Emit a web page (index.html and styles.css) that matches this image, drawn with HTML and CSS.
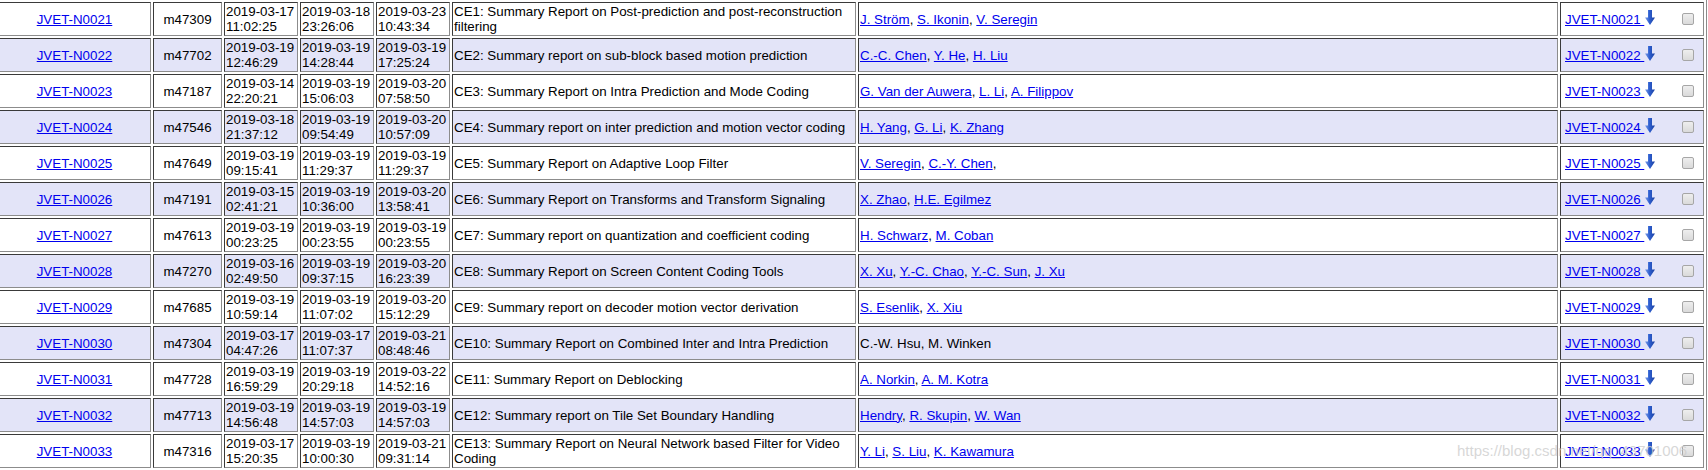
FILE: index.html
```html
<!DOCTYPE html>
<html>
<head>
<meta charset="utf-8">
<link rel="stylesheet" href="styles.css">
</head>
<body>
<table class="docs">
<tbody>
<tr class="r-odd"><td class="c-num"><a href="#">JVET-N0021</a></td><td class="c-m">m47309</td><td class="c-date">2019-03-17 11:02:25</td><td class="c-date">2019-03-18 23:26:06</td><td class="c-date">2019-03-23 10:43:34</td><td class="c-title">CE1: Summary Report on Post-prediction and post-reconstruction filtering</td><td class="c-auth"><a href="#">J. Ström</a>, <a href="#">S. Ikonin</a>, <a href="#">V. Seregin</a></td><td class="c-dl"><a href="#">JVET-N0021 </a><svg class="arrow" viewBox="0 0 10 15"><use href="#dl"/></svg><input type="checkbox" class="sel"></td></tr>
<tr class="r-even"><td class="c-num"><a href="#">JVET-N0022</a></td><td class="c-m">m47702</td><td class="c-date">2019-03-19 12:46:29</td><td class="c-date">2019-03-19 14:28:44</td><td class="c-date">2019-03-19 17:25:24</td><td class="c-title">CE2: Summary report on sub-block based motion prediction</td><td class="c-auth"><a href="#">C.-C. Chen</a>, <a href="#">Y. He</a>, <a href="#">H. Liu</a></td><td class="c-dl"><a href="#">JVET-N0022 </a><svg class="arrow" viewBox="0 0 10 15"><use href="#dl"/></svg><input type="checkbox" class="sel"></td></tr>
<tr class="r-odd"><td class="c-num"><a href="#">JVET-N0023</a></td><td class="c-m">m47187</td><td class="c-date">2019-03-14 22:20:21</td><td class="c-date">2019-03-19 15:06:03</td><td class="c-date">2019-03-20 07:58:50</td><td class="c-title">CE3: Summary Report on Intra Prediction and Mode Coding</td><td class="c-auth"><a href="#">G. Van der Auwera</a>, <a href="#">L. Li</a>, <a href="#">A. Filippov</a></td><td class="c-dl"><a href="#">JVET-N0023 </a><svg class="arrow" viewBox="0 0 10 15"><use href="#dl"/></svg><input type="checkbox" class="sel"></td></tr>
<tr class="r-even"><td class="c-num"><a href="#">JVET-N0024</a></td><td class="c-m">m47546</td><td class="c-date">2019-03-18 21:37:12</td><td class="c-date">2019-03-19 09:54:49</td><td class="c-date">2019-03-20 10:57:09</td><td class="c-title">CE4: Summary report on inter prediction and motion vector coding</td><td class="c-auth"><a href="#">H. Yang</a>, <a href="#">G. Li</a>, <a href="#">K. Zhang</a></td><td class="c-dl"><a href="#">JVET-N0024 </a><svg class="arrow" viewBox="0 0 10 15"><use href="#dl"/></svg><input type="checkbox" class="sel"></td></tr>
<tr class="r-odd"><td class="c-num"><a href="#">JVET-N0025</a></td><td class="c-m">m47649</td><td class="c-date">2019-03-19 09:15:41</td><td class="c-date">2019-03-19 11:29:37</td><td class="c-date">2019-03-19 11:29:37</td><td class="c-title">CE5: Summary Report on Adaptive Loop Filter</td><td class="c-auth"><a href="#">V. Seregin</a>, <a href="#">C.-Y. Chen</a>, </td><td class="c-dl"><a href="#">JVET-N0025 </a><svg class="arrow" viewBox="0 0 10 15"><use href="#dl"/></svg><input type="checkbox" class="sel"></td></tr>
<tr class="r-even"><td class="c-num"><a href="#">JVET-N0026</a></td><td class="c-m">m47191</td><td class="c-date">2019-03-15 02:41:21</td><td class="c-date">2019-03-19 10:36:00</td><td class="c-date">2019-03-20 13:58:41</td><td class="c-title">CE6: Summary Report on Transforms and Transform Signaling</td><td class="c-auth"><a href="#">X. Zhao</a>, <a href="#">H.E. Egilmez</a></td><td class="c-dl"><a href="#">JVET-N0026 </a><svg class="arrow" viewBox="0 0 10 15"><use href="#dl"/></svg><input type="checkbox" class="sel"></td></tr>
<tr class="r-odd"><td class="c-num"><a href="#">JVET-N0027</a></td><td class="c-m">m47613</td><td class="c-date">2019-03-19 00:23:25</td><td class="c-date">2019-03-19 00:23:55</td><td class="c-date">2019-03-19 00:23:55</td><td class="c-title">CE7: Summary report on quantization and coefficient coding</td><td class="c-auth"><a href="#">H. Schwarz</a>, <a href="#">M. Coban</a></td><td class="c-dl"><a href="#">JVET-N0027 </a><svg class="arrow" viewBox="0 0 10 15"><use href="#dl"/></svg><input type="checkbox" class="sel"></td></tr>
<tr class="r-even"><td class="c-num"><a href="#">JVET-N0028</a></td><td class="c-m">m47270</td><td class="c-date">2019-03-16 02:49:50</td><td class="c-date">2019-03-19 09:37:15</td><td class="c-date">2019-03-20 16:23:39</td><td class="c-title">CE8: Summary Report on Screen Content Coding Tools</td><td class="c-auth"><a href="#">X. Xu</a>, <a href="#">Y.-C. Chao</a>, <a href="#">Y.-C. Sun</a>, <a href="#">J. Xu</a></td><td class="c-dl"><a href="#">JVET-N0028 </a><svg class="arrow" viewBox="0 0 10 15"><use href="#dl"/></svg><input type="checkbox" class="sel"></td></tr>
<tr class="r-odd"><td class="c-num"><a href="#">JVET-N0029</a></td><td class="c-m">m47685</td><td class="c-date">2019-03-19 10:59:14</td><td class="c-date">2019-03-19 11:07:02</td><td class="c-date">2019-03-20 15:12:29</td><td class="c-title">CE9: Summary report on decoder motion vector derivation</td><td class="c-auth"><a href="#">S. Esenlik</a>, <a href="#">X. Xiu</a></td><td class="c-dl"><a href="#">JVET-N0029 </a><svg class="arrow" viewBox="0 0 10 15"><use href="#dl"/></svg><input type="checkbox" class="sel"></td></tr>
<tr class="r-even"><td class="c-num"><a href="#">JVET-N0030</a></td><td class="c-m">m47304</td><td class="c-date">2019-03-17 04:47:26</td><td class="c-date">2019-03-17 11:07:37</td><td class="c-date">2019-03-21 08:48:46</td><td class="c-title">CE10: Summary Report on Combined Inter and Intra Prediction</td><td class="c-auth">C.-W. Hsu, M. Winken</td><td class="c-dl"><a href="#">JVET-N0030 </a><svg class="arrow" viewBox="0 0 10 15"><use href="#dl"/></svg><input type="checkbox" class="sel"></td></tr>
<tr class="r-odd"><td class="c-num"><a href="#">JVET-N0031</a></td><td class="c-m">m47728</td><td class="c-date">2019-03-19 16:59:29</td><td class="c-date">2019-03-19 20:29:18</td><td class="c-date">2019-03-22 14:52:16</td><td class="c-title">CE11: Summary Report on Deblocking</td><td class="c-auth"><a href="#">A. Norkin</a>, <a href="#">A. M. Kotra</a></td><td class="c-dl"><a href="#">JVET-N0031 </a><svg class="arrow" viewBox="0 0 10 15"><use href="#dl"/></svg><input type="checkbox" class="sel"></td></tr>
<tr class="r-even"><td class="c-num"><a href="#">JVET-N0032</a></td><td class="c-m">m47713</td><td class="c-date">2019-03-19 14:56:48</td><td class="c-date">2019-03-19 14:57:03</td><td class="c-date">2019-03-19 14:57:03</td><td class="c-title">CE12: Summary report on Tile Set Boundary Handling</td><td class="c-auth"><a href="#">Hendry</a>, <a href="#">R. Skupin</a>, <a href="#">W. Wan</a></td><td class="c-dl"><a href="#">JVET-N0032 </a><svg class="arrow" viewBox="0 0 10 15"><use href="#dl"/></svg><input type="checkbox" class="sel"></td></tr>
<tr class="r-odd"><td class="c-num"><a href="#">JVET-N0033</a></td><td class="c-m">m47316</td><td class="c-date">2019-03-17 15:20:35</td><td class="c-date">2019-03-19 10:00:30</td><td class="c-date">2019-03-21 09:31:14</td><td class="c-title">CE13: Summary Report on Neural Network based Filter for Video Coding</td><td class="c-auth"><a href="#">Y. Li</a>, <a href="#">S. Liu</a>, <a href="#">K. Kawamura</a></td><td class="c-dl"><a href="#">JVET-N0033 </a><svg class="arrow" viewBox="0 0 10 15"><use href="#dl"/></svg><input type="checkbox" class="sel"></td></tr>
</tbody>
</table>
<svg class="defs" width="0" height="0">
<defs>
<linearGradient id="blueg" x1="0" y1="0" x2="1" y2="0">
<stop offset="0" stop-color="#7c9ee8"/>
<stop offset="0.45" stop-color="#2e5fd0"/>
<stop offset="1" stop-color="#1a3f9e"/>
</linearGradient>
<g id="dl"><path d="M3 0 H7 V7.5 H10 L5 15 L0 7.5 H3 Z" fill="url(#blueg)"/></g>
</defs>
</svg>
<div class="watermark">https://blog.csdn.net/qq_43701006</div>
</body>
</html>
```

FILE: styles.css
```css
html, body {
  margin: 0;
  padding: 0;
  background: #ffffff;
  overflow: hidden;
}

body {
  font-family: "Liberation Sans", Arial, sans-serif;
  font-size: 13.333px;
  color: #000;
  position: relative;
  width: 1708px;
  height: 470px;
}

.docs {
  table-layout: fixed;
  border-collapse: separate;
  border-spacing: 2px;
  border: 1px solid #9a9a9a;
  border-color: #c8c8c8 #8a8a8a #8a8a8a #c8c8c8;
  margin: -1px 0 0 -5px;
}

.docs td {
  padding: 1px;
  line-height: 15px;
  border: 1px solid;
  border-color: #3a3a3a #8c8c8c #8c8c8c #3a3a3a;
  vertical-align: middle;
  height: 30px;
}

.r-even td {
  background: #e3e4f8;
}

.r-odd td {
  background: #ffffff;
}

.docs a {
  color: #0000ee;
  text-decoration: underline;
}

.c-num { width: 149px; text-align: center; }
.c-m { width: 65px; text-align: center; }
.c-date { width: 70px; }
.c-title { width: 400px; }
.c-auth { width: 696px; }
.c-dl {
  width: 140px;
  white-space: nowrap;
}

.c-dl > a:first-child {
  margin-left: 3px;
}

.arrow {
  width: 10px;
  height: 15px;
  margin: -4px 0 0 1px;
  vertical-align: -1px;
}

.sel {
  -webkit-appearance: none;
  appearance: none;
  width: 12px;
  height: 12px;
  margin: 0 3px 0 27px;
  border: 1px solid #a6a6a6;
  border-radius: 2px;
  background: linear-gradient(#eeeeee, #dadada);
  vertical-align: -1px;
  box-sizing: border-box;
}

.defs {
  position: absolute;
  width: 0;
  height: 0;
}

.watermark {
  position: absolute;
  left: 1457px;
  top: 442px;
  font-family: "Liberation Sans", Arial, sans-serif;
  font-size: 15px;
  line-height: 17px;
  color: rgba(205, 205, 205, 0.8);
  white-space: nowrap;
  pointer-events: none;
}
```
